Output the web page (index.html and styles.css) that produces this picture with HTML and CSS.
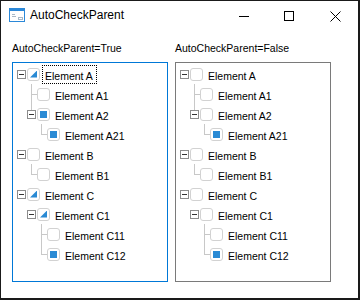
FILE: index.html
```html
<!DOCTYPE html>
<html lang="en">
<head>
    <meta charset="UTF-8">
    <title>AutoCheckParent</title>
    <link rel="stylesheet" href="styles.css">
</head>
<body>

    <div class="window">
        <div class="titlebar">
            <svg class="app-icon" width="16" height="14" viewBox="0 0 16 14">
                <rect x="0.5" y="0.5" width="15" height="13" fill="#fff" stroke="#2b88d8"/>
                <rect x="0" y="0" width="16" height="3" fill="#2b88d8"/>
                <path d="M3 6.5h3M3 8.5h4" stroke="#a9b8c6"/>
                <rect x="9.5" y="9.5" width="4" height="2" fill="none" stroke="#a9b8c6"/>
            </svg>
            <span class="title">AutoCheckParent</span>
            <div class="controls">
                <span class="ctl ctl-min"><svg width="10" height="10" viewBox="0 0 10 10"><path d="M0 5.5h10" stroke="#000"/></svg></span>
                <span class="ctl"><svg width="10" height="10" viewBox="0 0 10 10"><rect x="0.5" y="0.5" width="9" height="9" fill="none" stroke="#000"/></svg></span>
                <span class="ctl"><svg width="11" height="11" viewBox="0 0 11 11"><path d="M0.5 0.5l10 10M10.5 0.5l-10 10" stroke="#000"/></svg></span>
            </div>
        </div>

        <div class="content">
            <div class="panel">
                <div class="caption">AutoCheckParent=True</div>
                <div class="tree focused">
                    <div class="node lvl0"><span class="gutter"><span class="expander"></span></span><span class="check part"></span><span class="text focus">Element A</span></div>
                    <div class="node lvl1"><span class="gutter tee"></span><span class="check"></span><span class="text">Element A1</span></div>
                    <div class="node lvl1"><span class="gutter up"><span class="expander"></span></span><span class="check on"></span><span class="text">Element A2</span></div>
                    <div class="node lvl2"><span class="gutter ell"></span><span class="check on"></span><span class="text">Element A21</span></div>
                    <div class="node lvl0"><span class="gutter"><span class="expander"></span></span><span class="check"></span><span class="text">Element B</span></div>
                    <div class="node lvl1"><span class="gutter ell"></span><span class="check"></span><span class="text">Element B1</span></div>
                    <div class="node lvl0"><span class="gutter"><span class="expander"></span></span><span class="check part"></span><span class="text">Element C</span></div>
                    <div class="node lvl1"><span class="gutter"><span class="expander"></span></span><span class="check part"></span><span class="text">Element C1</span></div>
                    <div class="node lvl2"><span class="gutter tee"></span><span class="check"></span><span class="text">Element C11</span></div>
                    <div class="node lvl2"><span class="gutter ell"></span><span class="check on"></span><span class="text">Element C12</span></div>
                </div>
            </div>

            <div class="panel">
                <div class="caption">AutoCheckParent=False</div>
                <div class="tree">
                    <div class="node lvl0"><span class="gutter"><span class="expander"></span></span><span class="check"></span><span class="text">Element A</span></div>
                    <div class="node lvl1"><span class="gutter tee"></span><span class="check"></span><span class="text">Element A1</span></div>
                    <div class="node lvl1"><span class="gutter up"><span class="expander"></span></span><span class="check"></span><span class="text">Element A2</span></div>
                    <div class="node lvl2"><span class="gutter ell"></span><span class="check on"></span><span class="text">Element A21</span></div>
                    <div class="node lvl0"><span class="gutter"><span class="expander"></span></span><span class="check"></span><span class="text">Element B</span></div>
                    <div class="node lvl1"><span class="gutter ell"></span><span class="check"></span><span class="text">Element B1</span></div>
                    <div class="node lvl0"><span class="gutter"><span class="expander"></span></span><span class="check"></span><span class="text">Element C</span></div>
                    <div class="node lvl1"><span class="gutter"><span class="expander"></span></span><span class="check"></span><span class="text">Element C1</span></div>
                    <div class="node lvl2"><span class="gutter tee"></span><span class="check"></span><span class="text">Element C11</span></div>
                    <div class="node lvl2"><span class="gutter ell"></span><span class="check on"></span><span class="text">Element C12</span></div>
                </div>
            </div>
        </div>
    </div>

</body>
</html>
```

FILE: styles.css
```css
body {
    margin: 0;
    background: #fff;
    font-family: 'Liberation Sans', Arial, sans-serif;
    color: #000;
}

.window {
    width: 360px;
    height: 300px;
    box-sizing: border-box;
    border: 2px solid #1a1a1a;
    border-top-width: 1px;
    border-left-width: 1px;
    background: #fff;
}

/* Title bar */
.titlebar {
    height: 30px;
    display: flex;
    align-items: flex-start;
}

.app-icon {
    margin: 7px 5px 0 8px;
    flex-shrink: 0;
}

.title {
    font-size: 12px;
    line-height: 28px;
}

.controls {
    margin-left: auto;
    display: flex;
}

.ctl {
    width: 46px;
    height: 30px;
    display: flex;
    justify-content: center;
    align-items: center;
}

.ctl-min {
    width: 44px;
}

/* Panels */
.content {
    display: grid;
    grid-template-columns: 156px 156px;
    column-gap: 7px;
    padding: 11px 0 0 11px;
}

.caption {
    font-size: 10.5px;
    line-height: 13px;
    margin-bottom: 7px;
}

.tree {
    height: 220px;
    box-sizing: border-box;
    border: 1px solid #7a7a7a;
    padding-top: 1px;
}

.tree.focused {
    border-color: #0078d7;
}

/* Nodes */
.node {
    height: 20px;
    display: flex;
    align-items: center;
    font-size: 10.5px;
}

.lvl0 { padding-left: 4px; }
.lvl1 { padding-left: 14px; }
.lvl2 { padding-left: 24px; }

.gutter {
    position: relative;
    width: 10px;
    height: 20px;
    flex-shrink: 0;
}

.expander {
    position: absolute;
    left: 0;
    top: 6px;
    width: 9px;
    height: 9px;
    box-sizing: border-box;
    border: 1px solid #8c8c8c;
    background: #fff;
}

.expander::after {
    content: "";
    position: absolute;
    left: 1px;
    top: 3px;
    width: 5px;
    height: 1px;
    background: #333;
}

/* tree connector lines */
.tee::before,
.ell::before,
.up::before {
    content: "";
    position: absolute;
    left: 4px;
    top: 0;
    width: 1px;
    background: #c8c8c8;
}

.tee::before { height: 20px; }
.ell::before { height: 11px; }
.up::before { height: 6px; }

.tee::after,
.ell::after {
    content: "";
    position: absolute;
    left: 4px;
    top: 10px;
    width: 6px;
    height: 1px;
    background: #c8c8c8;
}

/* Checkboxes */
.check {
    position: relative;
    width: 13px;
    height: 13px;
    box-sizing: border-box;
    border: 1px solid #d2d2d2;
    border-radius: 3px;
    background: #fff;
    flex-shrink: 0;
}

.check.on::after,
.check.part::after {
    content: "";
    position: absolute;
    left: 2px;
    top: 2px;
    width: 7px;
    height: 7px;
    background: #2a8ad4;
}

.check.part::after {
    clip-path: polygon(100% 0, 100% 100%, 0 100%);
}

.text {
    margin-left: 2px;
    padding: 0 3px 0 2px;
    height: 19px;
    line-height: 20px;
    box-sizing: border-box;
    border: 1px dotted transparent;
    white-space: nowrap;
}

.text.focus {
    border-color: #000;
}
```
